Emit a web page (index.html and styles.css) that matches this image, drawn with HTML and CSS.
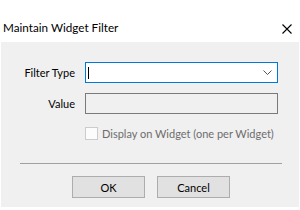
FILE: index.html
```html
<!DOCTYPE html>
<html lang="en">
<head>
    <meta charset="UTF-8">
    <title>Maintain Widget Filter</title>
    <link rel="stylesheet" href="styles.css">
</head>
<body>

<div class="titlebar">
    <span class="title">Maintain Widget Filter</span>
    <svg class="close" width="10" height="10" viewBox="0 0 10 10">
        <path d="M0.5 0.5 L9.5 9.5 M9.5 0.5 L0.5 9.5" stroke="#000" stroke-width="1.1" fill="none"/>
    </svg>
</div>

<div class="panel">
    <div class="fields">
        <label class="field-label" for="filterType">Filter Type</label>
        <div class="combo" id="filterType">
            <span class="caret"></span>
            <svg class="chevron" width="9" height="5" viewBox="0 0 9 5">
                <path d="M0.5 0.5 L4.5 4.5 L8.5 0.5" stroke="#555" stroke-width="1" fill="none"/>
            </svg>
        </div>

        <label class="field-label" for="value">Value</label>
        <div class="textbox" id="value"></div>

        <span></span>
        <label class="check">
            <span class="box"></span>
            Display on Widget (one per Widget)
        </label>
    </div>

    <div class="separator"></div>

    <div class="buttons">
        <button type="button">OK</button>
        <button type="button">Cancel</button>
    </div>
</div>

</body>
</html>
```

FILE: styles.css
```css
body {
    margin: 0;
    background: #fff;
    font-family: Lato, "Noto Sans", sans-serif;
    font-size: 11px;
    color: #000;
}
.titlebar {
    height: 42px;
    display: flex;
    justify-content: space-between;
}
.title {
    padding: 19px 0 0 3px;
    line-height: 16px;
    font-size: 11.7px;
}
.close {
    margin: 24px 8px 0 0;
    flex-shrink: 0;
}
.panel {
    margin: 0 1px;
    height: 165px;
    background: #f0f0f0;
    display: flex;
    flex-direction: column;
}
.fields {
    display: grid;
    grid-template-columns: 74px 193px;
    column-gap: 10px;
    row-gap: 10px;
    padding-top: 20px;
}
.field-label {
    text-align: right;
    line-height: 21px;
}
.combo {
    height: 21px;
    box-sizing: border-box;
    border: 1px solid #0078d7;
    background: #fff;
    display: flex;
    align-items: center;
    justify-content: space-between;
    padding: 0 5px 0 2px;
}
.caret {
    width: 1px;
    height: 12px;
    background: #000;
}
.textbox {
    height: 21px;
    box-sizing: border-box;
    border: 1px solid #7a7a7a;
    background: #f0f0f0;
}
.check {
    display: flex;
    align-items: center;
    gap: 4px;
    margin-top: 3px;
    color: #6d6d6d;
    line-height: 13px;
    white-space: nowrap;
}
.box {
    width: 13px;
    height: 13px;
    box-sizing: border-box;
    border: 1px solid #cccccc;
    background: #fcfcfc;
    flex-shrink: 0;
}
.separator {
    height: 1px;
    background: #a0a0a0;
    margin: 23px 17px 0 19px;
}
.buttons {
    display: flex;
    gap: 12px;
    padding: 12px 0 0 71px;
}
.buttons button {
    width: 73px;
    height: 22px;
    border: 1px solid #adadad;
    background: #e1e1e1;
    font-family: Lato, "Noto Sans", sans-serif;
    font-size: 11px;
    color: #000;
    padding: 0;
}
```
